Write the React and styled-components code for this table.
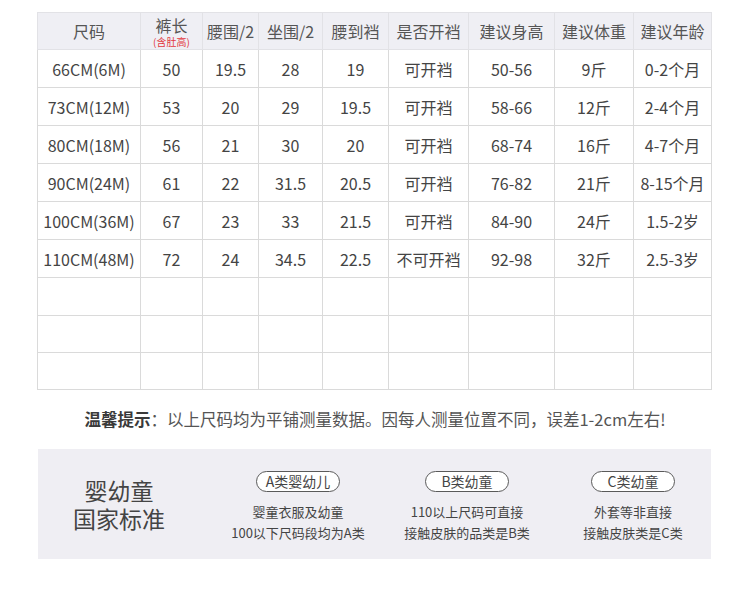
import React from "react";
import styled, { createGlobalStyle } from "styled-components";

const Global = createGlobalStyle`
  html, body { margin: 0; padding: 0; background: #fff; }
  body { font-family: "Noto Sans CJK SC", "Noto Sans", sans-serif; color: #444; }
`;

const Page = styled.div`
  width: 750px;
  padding: 12px 0 0 37px;
  box-sizing: border-box;
`;

const Table = styled.table`
  width: 674px;
  border-collapse: collapse;
  table-layout: fixed;
  font-size: 16px;
  color: #444;
  td, th { border: 1px solid #dadada; text-align: center; padding: 0; white-space: nowrap; }
`;

const HeadRow = styled.tr`
  height: 37px;
  th { background: #efeff4; font-weight: normal; color: #555; border-color: #e2e2e6; }
`;

const Row = styled.tr`
  height: ${p => (p.$empty ? 37 : 38)}px;
`;

const Stacked = styled.div`
  line-height: 16px;
  padding-top: 1px;
`;

const Sub = styled.span`
  display: block;
  font-size: 10px;
  line-height: 10px;
  color: #e2383d;
  margin-top: 4px;
`;

const Tip = styled.p`
  margin: 17px 0 18px -37px;
  width: 750px;
  text-align: center;
  font-size: 16.5px;
  line-height: 24px;
  color: #555;
  b { color: #3a3a3a; font-weight: bold; }
`;

const Standard = styled.div`
  width: 673px;
  height: 110px;
  margin-left: 1px;
  background: #efeef3;
  display: grid;
  grid-template-columns: 162px 196px 142px 174px;
  align-items: start;
`;

const Title = styled.div`
  align-self: center;
  text-align: center;
  font-size: 23px;
  line-height: 28px;
  color: #444;
`;

const Category = styled.div`
  display: flex;
  flex-direction: column;
  align-items: center;
  padding-top: 22px;
  padding-left: ${p => p.$shift || 0}px;
`;

const Pill = styled.div`
  width: 84px;
  height: 21px;
  box-sizing: border-box;
  border: 1px solid #5a5a5a;
  border-radius: 11px;
  font-size: 14px;
  line-height: 19px;
  text-align: center;
  color: #444;
  background: #fff;
  margin-bottom: 9px;
`;

const Desc = styled.div`
  font-size: 13px;
  line-height: 21px;
  text-align: center;
  color: #444;
`;

const widths = [103, 62, 56, 64, 66, 80, 86, 79, 78];

const rows = [
  ["66CM(6M)", "50", "19.5", "28", "19", "可开裆", "50-56", "9斤", "0-2个月"],
  ["73CM(12M)", "53", "20", "29", "19.5", "可开裆", "58-66", "12斤", "2-4个月"],
  ["80CM(18M)", "56", "21", "30", "20", "可开裆", "68-74", "16斤", "4-7个月"],
  ["90CM(24M)", "61", "22", "31.5", "20.5", "可开裆", "76-82", "21斤", "8-15个月"],
  ["100CM(36M)", "67", "23", "33", "21.5", "可开裆", "84-90", "24斤", "1.5-2岁"],
  ["110CM(48M)", "72", "24", "34.5", "22.5", "不可开裆", "92-98", "32斤", "2.5-3岁"],
];

const cats = [
  { tag: "A类婴幼儿", lines: ["婴童衣服及幼童", "100以下尺码段均为A类"], shift: 0 },
  { tag: "B类幼童", lines: ["110以上尺码可直接", "接触皮肤的品类是B类"], shift: 0 },
  { tag: "C类幼童", lines: ["外套等非直接", "接触皮肤类是C类"], shift: 16 },
];

export default function App() {
  return (
    <Page>
      <Global />
      <Table>
        <colgroup>
          {widths.map((w, i) => <col key={i} style={{ width: w }} />)}
        </colgroup>
        <thead>
          <HeadRow>
            <th>尺码</th>
            <th><Stacked>裤长<Sub>(含肚高)</Sub></Stacked></th>
            <th>腰围/2</th>
            <th>坐围/2</th>
            <th>腰到裆</th>
            <th>是否开裆</th>
            <th>建议身高</th>
            <th>建议体重</th>
            <th>建议年龄</th>
          </HeadRow>
        </thead>
        <tbody>
          {rows.map((r, i) => (
            <Row key={i}>{r.map((c, j) => <td key={j}>{c}</td>)}</Row>
          ))}
          {[0, 1, 2].map(i => (
            <Row key={"e" + i} $empty={i > 0}>{widths.map((_, j) => <td key={j} />)}</Row>
          ))}
        </tbody>
      </Table>
      <Tip><b>温馨提示</b>：以上尺码均为平铺测量数据。因每人测量位置不同，误差1-2cm左右!</Tip>
      <Standard>
        <Title>婴幼童<br />国家标准</Title>
        {cats.map(c => (
          <Category key={c.tag} $shift={c.shift}>
            <Pill>{c.tag}</Pill>
            {c.lines.map(l => <Desc key={l}>{l}</Desc>)}
          </Category>
        ))}
      </Standard>
    </Page>
  );
}
